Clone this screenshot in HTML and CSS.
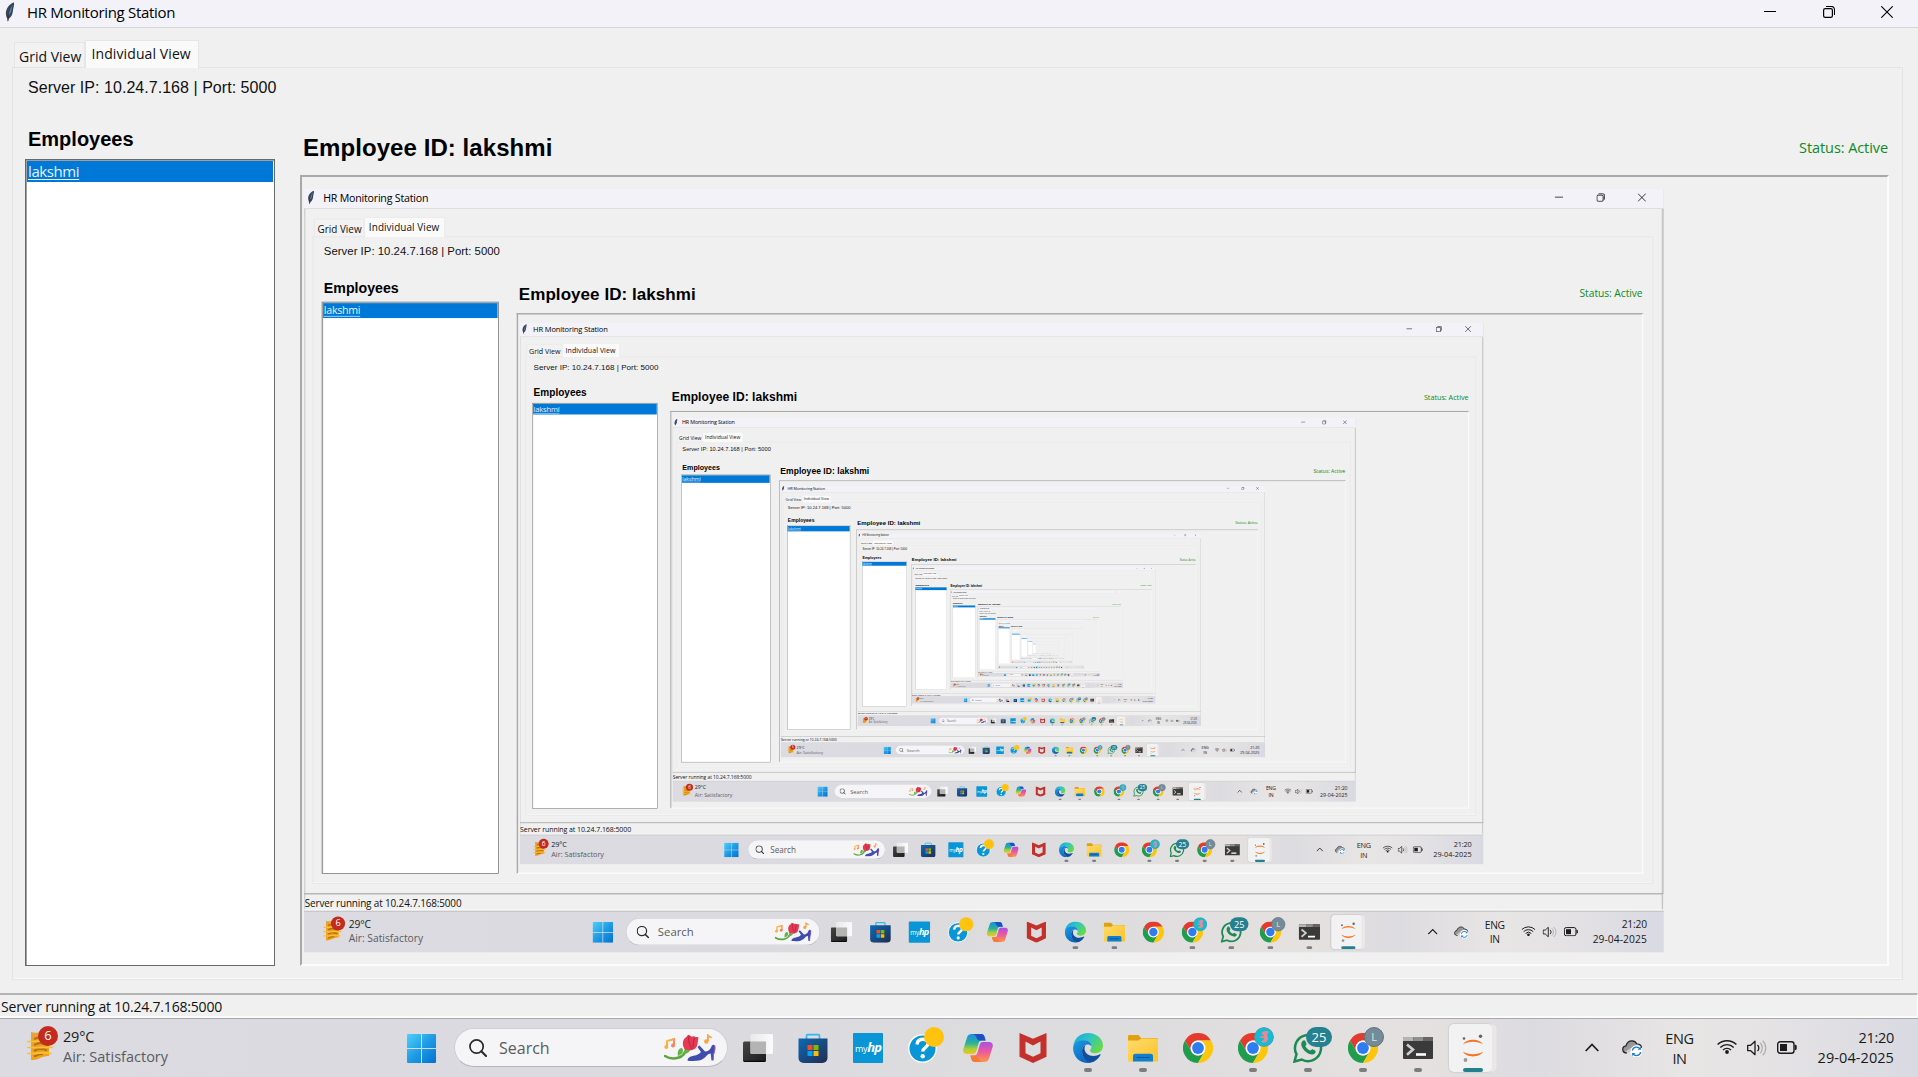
FILE: index.html
```html
<!DOCTYPE html>
<html lang="en">
<head>
<meta charset="utf-8">
<title>HR Monitoring Station</title>
<link rel="stylesheet" href="styles.css">
</head>
<body>
<svg class="sprite" aria-hidden="true">
  <defs>
    <linearGradient id="g-win" x1="0" y1="0" x2="1" y2="1"><stop offset="0" stop-color="#4fd0fb"/><stop offset=".5" stop-color="#1f9be6"/><stop offset="1" stop-color="#0072d0"/></linearGradient>
    <linearGradient id="g-dark" x1="0" y1="0" x2="1" y2="1"><stop offset="0" stop-color="#454545"/><stop offset="1" stop-color="#1c1c1c"/></linearGradient>
    <linearGradient id="g-light" x1="0" y1="0" x2="1" y2="0"><stop offset="0" stop-color="#e9e9e9"/><stop offset="1" stop-color="#fbfbfb"/></linearGradient>
    <linearGradient id="g-store" x1="0" y1="0" x2="1" y2="1"><stop offset="0" stop-color="#0c6ab5"/><stop offset="1" stop-color="#232c50"/></linearGradient>
    <linearGradient id="g-folder" x1="0" y1="0" x2="1" y2="1"><stop offset="0" stop-color="#ffdb6b"/><stop offset="1" stop-color="#fbc22c"/></linearGradient>
    <linearGradient id="g-edge1" x1="0" y1="0" x2="1" y2=".6"><stop offset="0" stop-color="#1aa3e0"/><stop offset=".5" stop-color="#2cc5c4"/><stop offset="1" stop-color="#66d94a"/></linearGradient>
    <linearGradient id="g-edge2" x1="0" y1="0" x2=".6" y2="1"><stop offset="0" stop-color="#1b9be2"/><stop offset="1" stop-color="#0b66c0"/></linearGradient>
    <linearGradient id="g-cop1" x1="0" y1="0" x2="0" y2="1"><stop offset="0" stop-color="#1a8fe0"/><stop offset=".45" stop-color="#29b09a"/><stop offset=".75" stop-color="#a9cf3b"/><stop offset="1" stop-color="#f3c21c"/></linearGradient>
    <linearGradient id="g-cop2" x1="0" y1="0" x2="0" y2="1"><stop offset="0" stop-color="#a94fe6"/><stop offset=".5" stop-color="#ee5a9b"/><stop offset="1" stop-color="#fb9a45"/></linearGradient>
    <linearGradient id="g-note" x1="0" y1="0" x2="1" y2="1"><stop offset="0" stop-color="#ffc23d"/><stop offset="1" stop-color="#f2785c"/></linearGradient>
    <linearGradient id="g-smoke" x1="0" y1="0" x2="0" y2="1"><stop offset="0" stop-color="#e8a13a"/><stop offset="1" stop-color="#f2a21c"/></linearGradient>
    <linearGradient id="g-cloud" x1="0" y1="0" x2="1" y2="1"><stop offset="0" stop-color="#8a8a8a"/><stop offset=".5" stop-color="#9c9c9c"/><stop offset=".52" stop-color="#c9c9c9"/><stop offset="1" stop-color="#dedede"/></linearGradient>
  </defs>
  <symbol id="i-feather" viewBox="0 0 10 20">
    <path d="M9 .6C6 1.200 1.600 5 .9 10.500c-.3 2.600.8 5 1.600 6.500l.4 3 .7-3C6.500 15 7.600 12 7.900 9 8.200 6 9.500 3 9 .6z" fill="#3c4450"/>
    <path d="M8 2C5.500 4 3.500 8 3 14c2.600-2.500 3.300-5 3.600-7.500C6.900 4.500 8 3.500 8 2z" fill="#4f8ede"/>
    <path d="M7.500 2.500C4 7 3 12 2.900 19" fill="none" stroke="#1d222b" stroke-width=".7"/>
  </symbol>
  <symbol id="i-min" viewBox="0 0 12 12"><path d="M0 5.500h12" stroke="#000" stroke-width="1"/></symbol>
  <symbol id="i-max" viewBox="0 0 12 12"><path d="M3 .5h5.500a3 3 0 0 1 3 3V9" fill="none" stroke="#000" stroke-width="1.100"/><rect x=".6" y="2.600" width="8.800" height="8.800" rx="1.600" fill="none" stroke="#000" stroke-width="1.200"/></symbol>
  <symbol id="i-close" viewBox="0 0 12 12"><path d="M.3.3l11.400 11.400M11.700.3L.3 11.700" stroke="#000" stroke-width="1.100"/></symbol>
  <symbol id="i-weather" viewBox="0 0 26 32">
    <path d="M4 2c4 2 12-1 18 1v23c-6-1-12 5-18 4z" fill="url(#g-smoke)"/>
    <path d="M7 9c4-2 9-2 13 0M7 15c4-2.500 9-2 13 0M7 21c4-2.500 9-2.500 13-.5M7 26.500c4-2 6-2.500 9-2.500" fill="none" stroke="#b87310" stroke-width="2.200"/>
    <path d="M1 11.500h6c4 0 8-2 17 0M0 17.500h6c5 1 10-1 20 0M1 23.500h6c5 0 8-1.500 17 0" fill="none" stroke="#fbc02d" stroke-width="1.700" stroke-linecap="round"/>
  </symbol>
  <symbol id="i-win" viewBox="0 0 29 29"><path d="M1 0h13v14H0V1a1 1 0 0 1 1-1zM15 0h13a1 1 0 0 1 1 1v13H15zM0 15h14v14H1a1 1 0 0 1-1-1zM15 15h14v13a1 1 0 0 1-1 1H15z" fill="url(#g-win)"/></symbol>
  <symbol id="i-search" viewBox="0 0 19 19"><circle cx="8" cy="8" r="7" fill="none" stroke="#2a2a2a" stroke-width="1.800"/><path d="M13 13l5 5" stroke="#2a2a2a" stroke-width="2.200" stroke-linecap="round"/></symbol>
  <symbol id="i-doodle" viewBox="0 0 52 28">
    <path d="M1 22c8 5 20 2 21-7 1-2 2-3 5-3" fill="none" stroke="#5aa63c" stroke-width="2.400" stroke-linecap="round"/>
    <path d="M14 22c-1-5 1-8 4-8 2 3 1 6-4 8zM18 20c3-4 5-4 8-4-1 3-4 4-8 4z" fill="#63b446"/>
    <path d="M20.500 4.500C22 3.500 23 2.500 24 .8c1.500.2 2.500 1 3.500 2 1.500-.8 3-.8 4.500.4 1-.2 1.800 0 2.500.3-.8 3.200-.5 6.500-2 9.500-2 3.500-8.500 4.500-12 2-1.800-2.800-2.500-7.500 0-10.500z" fill="#e23b52"/>
    <path d="M25 2c-1 4 0 8 3 13M30.500 4c-1 3-1.500 6-1.500 9" fill="none" stroke="#b8243c" stroke-width="1"/>
    <path d="M3 13V7l7-2v6" fill="none" stroke="url(#g-note)" stroke-width="2"/><circle cx="2.300" cy="13" r="2" fill="#f8b13c"/><circle cx="9" cy="11.500" r="2" fill="#f2875a"/>
    <path d="M44 7V1.500c1 1.500 3 1 3.500 2.500" fill="none" stroke="#f6a444" stroke-width="1.800"/><circle cx="42.300" cy="7.500" r="2.200" fill="#f6a444"/>
    <path d="M35.500 11.500l5.500 6c3 0 5.500-2 6.500-5 .6-1.800 2-2.500 3.300-1 .8 3 .2 6-.8 9l-.5 6h-2l-.8-7c-3 0-4.200 3-7.200 5-3 2.500-8 2.800-16 2.300 0-3 2-4.300 6-5 4-.8 6-1.800 7.500-3.800l-3.500-5z" fill="#3f4dab"/>
    <path d="M50.600 11c1 3 0 6-1 9l-.5 6" fill="none" stroke="#a95bd0" stroke-width="1"/>
  </symbol>
  <symbol id="i-taskview" viewBox="0 0 30 30">
    <rect x="0" y="8.500" width="23" height="20.500" rx="1.500" fill="url(#g-dark)"/><path d="M1 28.300h21" stroke="#000"/>
    <rect x="7.500" y="1" width="22.500" height="20" rx="1.500" fill="url(#g-light)"/><path d="M7.500 8.500H23V21H8.500a1 1 0 0 1-1-1z" fill="#b4b4b4"/>
  </symbol>
  <symbol id="i-store" viewBox="0 0 30 30">
    <path d="M8.500 6V2.700C8.500 2 9 1.600 9.600 1.600h10.800c.6 0 1.100.4 1.100 1.100V6" fill="none" stroke="#35b6ef" stroke-width="1.700"/>
    <path d="M.5 5.500h29V25a5 5 0 0 1-5 5h-19a5 5 0 0 1-5-5z" fill="url(#g-store)"/>
    <path d="M9.500 12h5v5h-5z" fill="#f25022"/><path d="M15.500 12h5v5h-5z" fill="#7fba00"/><path d="M9.500 18h5v5h-5z" fill="#00a4ef"/><path d="M15.500 18h5v5h-5z" fill="#ffb900"/>
  </symbol>
  <symbol id="i-help" viewBox="0 0 30 30">
    <circle cx="14.500" cy="15.500" r="13.700" fill="#0a96d6" stroke="#fff" stroke-width="1.300"/>
    <path d="M9 11.500c.3-4 3-5.200 5.800-5.200 3.200 0 5.200 1.700 5.200 4.300 0 3.900-5.200 3.900-5.200 7.900" fill="none" stroke="#fff" stroke-width="3.400"/><circle cx="14.700" cy="23.300" r="2.200" fill="#fff"/>
  </symbol>
  <symbol id="i-copilot" viewBox="0 0 30 30">
    <path d="M9 1h9c2 0 3 1 3.600 3l1 3.500h-3.500c-2 0-3 1-3.600 3l-2.300 8c-.5 1.700-1.500 2.500-3.500 2.500H4C1 21-.4 19 .4 16L4 4.500C4.800 2 6.300 1 9 1z" fill="url(#g-cop1)"/>
    <path d="M9 1h9c2 0 3 1 3.600 3l1 3.500h-6C13 7.500 14 1 9 1z" fill="#1f4fc4"/>
    <path d="M21 29h-9c-2 0-3-1-3.600-3l-1-3.500h3.500c2 0 3-1 3.600-3l2.300-8c.5-1.700 1.500-2.500 3.500-2.500H26c3 0 4.400 2 3.600 5L26 25.500c-.8 2.500-2.300 3.500-5 3.500z" fill="url(#g-cop2)"/>
    <path d="M21 29h-9c-2 0-3-1-3.600-3l-1-3.500h4c4 0 4 6.500 9.600 6.500z" fill="#f57a36"/>
  </symbol>
  <symbol id="i-mcafee" viewBox="0 0 27 30"><path d="M0 0l13.500 5.800L27 0v23.800L13.500 30 0 23.800zM6 8.500v11.700l7.500 3.500 7.500-3.500V8.500l-7.500 3.900z" fill="#c4302b" fill-rule="evenodd"/></symbol>
  <symbol id="i-edge" viewBox="0 0 30 30">
    <path d="M.3 13C1.500 5 7.500 0 15 0c8.500 0 15 5.800 15 12.500 0 5-3.500 7.700-7.600 7.700-3.400 0-5.400-1.200-5.400-2.700 0-1 1.500-1.500 1.500-4C18.500 10 15.500 7.500 11 7.500 6 7.500 2.500 10 .3 13z" fill="url(#g-edge1)"/>
    <path d="M.2 14C1 9.800 5 7.300 10.500 7.300c5 0 8 2.700 8 6-1.300-1.400-2.500-1.800-4.200-1.800-3.300 0-5.300 3-5.300 6.500 0 5.500 4 10 9.500 11.500-1 .3-2.200.5-3.500.5C6.500 30-.6 23 .2 14z" fill="url(#g-edge2)"/>
    <path d="M9 18c0-3 1.500-5.500 4-6.300-1 1-1.500 2.300-1.500 3.800 0 4.500 4 7.500 9 7.500 2.500 0 4.500-.7 6.300-1.700.6-.3 1 .2.700.7C25 26.500 21 29.300 17.500 29.500 13 28.500 9 24 9 18z" fill="#0f4f9c"/>
  </symbol>
  <symbol id="i-folder" viewBox="0 0 30 30">
    <path d="M0 3.500C0 2.500.7 2 1.500 2h8c1 0 1.500.4 2 1.200L13 5h15.500c1 0 1.500.6 1.500 1.500V9H0z" fill="#e0a010"/>
    <path d="M0 7.500h11l2-2h15.500c1 0 1.500.5 1.500 1.500v21.500H0z" fill="url(#g-folder)"/>
    <path d="M5 28.500V23c0-1.500 1-2.300 2.300-2.300h15.400c1.300 0 2.300.8 2.300 2.300v5.500z" fill="#0f7fd4"/><path d="M9 24.500h12" stroke="#08529a" stroke-width="1.200" stroke-linecap="round"/>
  </symbol>
  <symbol id="i-chrome" viewBox="0 0 30 30">
    <path d="M2 7.500A15 15 0 0 1 28 7.500H15a7.500 7.500 0 0 0-6.500 11.200z" fill="#e33b2e"/>
    <path d="M2 7.500A15 15 0 0 0 15 30l6.500-11.200a7.500 7.500 0 0 1-13 0z" fill="#1f9d4d"/>
    <path d="M28 7.500A15 15 0 0 1 15 30l6.500-11.200A7.500 7.500 0 0 0 15 7.500z" fill="#fdc60d"/>
    <circle cx="15" cy="15" r="7.400" fill="#fff"/><circle cx="15" cy="15" r="5.900" fill="#2e7cf0"/>
  </symbol>
  <symbol id="i-whatsapp" viewBox="0 0 30 30">
    <path d="M1.500 28.500l2-7.300A13 13 0 1 1 8.700 26.500z" fill="none" stroke="#1d8a55" stroke-width="2.500"/>
    <path d="M9.500 8c1-1 2.300-.9 2.800.1l1.200 2.700c.3.800-1.200 1.900-1 2.400 1 2 2.500 3.400 4.500 4.300.7.200 1.600-1.600 2.400-1.300l2.700 1.400c1 .6.500 2.300-.5 3.100-1.500 1.200-3.600 1.100-6.500-.3-3-1.500-5-3.800-6.200-6.300C7.900 11.800 8 9.500 9.500 8z" fill="#1d8a55"/>
  </symbol>
  <symbol id="i-terminal" viewBox="0 0 30 30">
    <rect x="0" y="4" width="30" height="22" rx="1" fill="#3a3a3a"/><path d="M0 8V5a1 1 0 0 1 1-1h9.500v4z" fill="#b5b5b5"/><path d="M10.500 4H20v4h-9.500z" fill="#8f8f8f"/><path d="M20 4h9a1 1 0 0 1 1 1v3H20z" fill="#666"/>
    <path d="M4 11.500l6 5-6 5.200" fill="none" stroke="#cfcfcf" stroke-width="2.600"/><path d="M13 21.500h10" stroke="#fff" stroke-width="2.600"/>
  </symbol>
  <symbol id="i-jupyter" viewBox="0 0 22 30">
    <path d="M1 11.500C4 5 18 5 21 11.500 16 7.800 6 7.800 1 11.500zM1 18.500C4 25 18 25 21 18.500 16 22.200 6 22.200 1 18.500z" fill="#f37726"/>
    <circle cx="2" cy="5.500" r="1.300" fill="#616262"/><circle cx="18.500" cy="3.300" r="1.700" fill="#616262"/><circle cx="3.500" cy="27" r="1.900" fill="#989798"/>
  </symbol>
  <symbol id="i-up" viewBox="0 0 14 9"><path d="M.7 8L7 1.500 13.300 8" fill="none" stroke="#1c1c1c" stroke-width="1.700"/></symbol>
  <symbol id="i-cloud" viewBox="0 0 20 18">
    <path d="M5 14C-.5 14-.5 7.500 4 6.800 5.500 1 12.500.2 14.800 5 18 4.800 20 7 19.300 9.500" fill="url(#g-cloud)" stroke="#222" stroke-width="1.200"/>
    <circle cx="14.500" cy="12.300" r="6" fill="#fff"/>
    <path d="M10.300 11.500a4.300 4.300 0 0 1 7.800-1.500M18.700 13.100a4.300 4.300 0 0 1-7.800 1.500" fill="none" stroke="#1c78cf" stroke-width="1.300"/><path d="M18.900 7.500v3.200h-3.200zM10.100 17.100v-3.200h3.200z" fill="#1c78cf"/>
  </symbol>
  <symbol id="i-wifi" viewBox="0 0 20 15"><path d="M.6 5.600a13.300 13.300 0 0 1 18.800 0M3.300 8.400a9.500 9.500 0 0 1 13.400 0M6 11a5.700 5.700 0 0 1 8 0" fill="none" stroke="#1c1c1c" stroke-width="1.400"/><circle cx="10" cy="13" r="1.900" fill="#1c1c1c"/></symbol>
  <symbol id="i-sound" viewBox="0 0 20 16">
    <path d="M.7 5.300h3L8 1.300v13.400l-4.300-4h-3z" fill="none" stroke="#1c1c1c" stroke-width="1.300" stroke-linejoin="round"/>
    <path d="M10.500 5a4 4 0 0 1 0 6" fill="none" stroke="#1c1c1c" stroke-width="1.300"/><path d="M13 2.800a7 7 0 0 1 0 10.400M15.700.8a10 10 0 0 1 0 14.400" fill="none" stroke="#b0aeae" stroke-width="1.200"/>
  </symbol>
  <symbol id="i-battery" viewBox="0 0 20 13"><rect x=".7" y=".7" width="16.300" height="11.600" rx="2.500" fill="none" stroke="#1c1c1c" stroke-width="1.400"/><rect x="3" y="3" width="7" height="7" fill="#1c1c1c"/><path d="M17.700 3.800c1.300 0 2 .5 2 1.400v2.600c0 .9-.7 1.400-2 1.400z" fill="#1c1c1c"/></symbol>
  <symbol id="i-avatar" viewBox="0 0 20 20"><circle cx="10" cy="10" r="9.600" fill="#12bcd4" stroke="#5b8f98" stroke-width=".8"/><path d="M14.500 4.500c-3-1-7 0-7 2 0 1.500 2 1.200 3 2.500-2 .3-5 0-5 1 1 1.500 4 .8 5 1.600-1 1.800-2.500 2.200-3.500 3.400 3 1.500 6.500.5 7-2.500.3-2-1-3.500-.6-5 .3-1.200 1.300-1.500 1.100-3z" fill="#e58a94"/></symbol>
</svg>

<div class="screen" id="screen">
  <div class="client">
    <header class="titlebar">
      <svg class="feather"><use href="#i-feather"/></svg>
      <span class="title">HR Monitoring Station</span>
      <div class="controls">
        <svg class="ctl"><use href="#i-min"/></svg>
        <svg class="ctl"><use href="#i-max"/></svg>
        <svg class="ctl"><use href="#i-close"/></svg>
      </div>
    </header>
    <nav class="tabs">
      <span class="tab">Grid View</span>
      <span class="tab tab-active">Individual View</span>
    </nav>
    <main class="pane">
      <p class="server">Server IP: 10.24.7.168 | Port: 5000</p>
      <div class="columns">
        <aside class="employees">
          <h2 class="list-title">Employees</h2>
          <div class="listbox"><div class="option">lakshmi</div></div>
        </aside>
        <section class="detail">
          <div class="detail-head">
            <h1 class="employee">Employee ID: lakshmi</h1>
            <span class="active">Status: Active</span>
          </div>
          <div class="canvas"><div class="feed"></div></div>
        </section>
      </div>
    </main>
    <footer class="statusbar">Server running at 10.24.7.168:5000</footer>
  </div>
  <div class="taskbar">
    <div class="weather">
      <div class="weather-icon"><svg class="smoke"><use href="#i-weather"/></svg><span class="count">6</span></div>
      <div class="weather-text"><span class="temp">29°C</span><span class="air">Air: Satisfactory</span></div>
    </div>
    <svg class="start"><use href="#i-win"/></svg>
    <div class="search"><svg class="glass"><use href="#i-search"/></svg><span class="search-text">Search</span><svg class="doodle"><use href="#i-doodle"/></svg></div>
    <div class="apps">
      <div class="app"><svg class="icon"><use href="#i-taskview"/></svg></div>
      <div class="app"><svg class="icon"><use href="#i-store"/></svg></div>
      <div class="app"><span class="myhp">my<i class="hp">hp</i></span></div>
      <div class="app"><svg class="icon"><use href="#i-help"/></svg><span class="badge badge-alert"></span></div>
      <div class="app"><svg class="icon"><use href="#i-copilot"/></svg></div>
      <div class="app"><svg class="icon"><use href="#i-mcafee"/></svg></div>
      <div class="app running"><svg class="icon"><use href="#i-edge"/></svg></div>
      <div class="app running"><svg class="icon"><use href="#i-folder"/></svg></div>
      <div class="app"><svg class="icon"><use href="#i-chrome"/></svg></div>
      <div class="app running"><svg class="icon"><use href="#i-chrome"/></svg><svg class="badge"><use href="#i-avatar"/></svg></div>
      <div class="app running"><svg class="icon"><use href="#i-whatsapp"/></svg><span class="badge badge-unread">25</span></div>
      <div class="app running"><svg class="icon"><use href="#i-chrome"/></svg><span class="badge badge-letter">L</span></div>
      <div class="app running"><svg class="icon"><use href="#i-terminal"/></svg></div>
      <div class="app focused"><svg class="icon"><use href="#i-jupyter"/></svg></div>
    </div>
    <div class="tray">
      <svg class="up"><use href="#i-up"/></svg>
      <svg class="cloud"><use href="#i-cloud"/></svg>
      <div class="lang"><span>ENG</span><span>IN</span></div>
      <svg class="wifi"><use href="#i-wifi"/></svg>
      <svg class="sound"><use href="#i-sound"/></svg>
      <svg class="battery"><use href="#i-battery"/></svg>
      <div class="clock"><span class="time">21:20</span><span class="date">29-04-2025</span></div>
    </div>
  </div>
</div>
<script src="feed.js"></script>
</body>
</html>
```
FILE: styles.css
```css
* { box-sizing: border-box; }
body { margin: 0; overflow: hidden; background: #f0f0f0; font-family: "Open Sans", "Noto Sans", sans-serif; color: #000; }
svg { display: block; flex: none; }
span, p, h1, h2 { white-space: nowrap; }
.sprite { position: absolute; width: 0; height: 0; }

.screen { width: 1918px; height: 1077px; display: flex; flex-direction: column; background: #f0f0f0; overflow: hidden; }
.client { flex: 1; min-height: 0; display: flex; flex-direction: column; }
.feed .client { box-shadow: inset 2px 0 #d2d2d2, inset -3px 0 #c6c6c6; }

.titlebar { height: 28px; flex: none; display: flex; align-items: flex-start; padding: 0 25px 0 5px; background: #f2f2f8; border-bottom: 1px solid #d6d6d6; }
.feather { width: 10px; height: 20px; margin: 2px 12px 0 0; }
.title { font-size: 15px; line-height: 25px; letter-spacing: -.3px; }
.controls { margin-left: auto; display: flex; gap: 46.500px; padding-top: 6px; }
.ctl { width: 12px; height: 12px; }

.tabs { height: 39px; flex: none; display: flex; align-items: flex-end; padding-left: 14px; font-size: 14px; color: #111; }
.tab { height: 25px; width: 71px; padding-left: 4px; line-height: 27px; border: 1px solid #e6e6e6; border-bottom: 0; background: #f2f2f2; }
.tab-active { height: 28px; width: 114px; margin-bottom: -1px; padding-left: 5.500px; line-height: 26px; letter-spacing: .1px; background: #fafafa; position: relative; }

.pane { flex: 1; min-height: 0; margin: 0 15px 13px 12px; padding: 10px 13px 13px 12px; border: 1px solid #e4e4e4; box-shadow: inset 0 -1px #fafafa; display: flex; flex-direction: column; }
.server { margin: 0 0 0 3px; height: 20px; font: 16px/20px "Liberation Sans", Arial, sans-serif; letter-spacing: .04px; color: #111; }
.columns { flex: 1; min-height: 0; display: flex; gap: 25px; padding-top: 27.500px; }
.employees { width: 250px; display: flex; flex-direction: column; }
.list-title { margin: 0 0 7.500px 3px; height: 26px; font: bold 20px/26px "Liberation Sans", Arial, sans-serif; }
.listbox { flex: 1; padding: 1px; background: #fff; border: 1px solid #696969; box-shadow: inset 1px 1px #a0a0a0; }
.option { height: 21px; line-height: 20px; font-size: 15px; letter-spacing: -.4px; color: #e8f2fb; background: #0078d7; text-decoration: underline; text-underline-offset: 1.500px; padding-left: 1px; }
.detail { flex: 1; display: flex; flex-direction: column; padding-top: 4.500px; }
.detail-head { height: 34px; display: flex; justify-content: space-between; align-items: center; padding: 1px 1px 0 3px; margin-bottom: 10.500px; }
.employee { margin: 0; font: bold 24px/34px "Liberation Sans", Arial, sans-serif; letter-spacing: .07px; }
.active { font-size: 14.500px; line-height: 34px; letter-spacing: -.08px; color: #0d8a1d; }
.canvas { flex: 1; min-height: 0; padding: 12px 0 0 1.800px; border: 2px solid #fbfbfb; border-top-color: #a8a8a8; border-left-color: #a8a8a8; }
.feed { width: 1360px; height: 764px; overflow: hidden; }
.feed .screen { transform: scale(.709); transform-origin: 0 0; }

.statusbar { height: 25px; flex: none; padding-left: 1px; border: solid #fbfbfb; border-width: 2px 1px 2px 0; border-top-color: #b4b4b4; font-size: 14px; line-height: 23px; letter-spacing: -.19px; color: #111; white-space: nowrap; }

.taskbar { height: 59px; flex: none; display: flex; border-top: 1px solid #a9a9ad; background: linear-gradient(90deg, #dbdbe1 0, #dadae0 30%, #dcdbde 48%, #dddcde 58%, #e5e1e0 74%, #dcdbdf 80%, #e8e5e5 88%, #e5e3e4 92%, #d9d9e2 100%); }
.weather { width: 380px; padding: 7px 0 0 27px; display: flex; gap: 10px; }
.weather-icon { position: relative; width: 26px; height: 37px; padding-top: 4px; }
.smoke { width: 26px; height: 32px; }
.count { position: absolute; left: 11px; top: 0; width: 20px; height: 20px; border-radius: 50%; background: #c42b1c; color: #fff; font-size: 13px; line-height: 19px; text-align: center; }
.weather-text { display: flex; flex-direction: column; padding-top: 1px; font-size: 14.500px; line-height: 20px; }
.temp { letter-spacing: -.2px; color: #1a1a1a; }
.air { color: #5a5a60; }
.start { width: 29px; height: 29px; margin: 15px 0 0 27px; }
.search { width: 274px; height: 39px; margin: 9px 0 0 17.500px; padding: 0 11px 0 14px; display: flex; align-items: center; border-radius: 20px; background: #f5f5f7; border: 1px solid #cfcfd4; border-bottom-color: #b5b5ba; }
.glass { width: 18px; height: 18px; }
.search-text { margin: 1px auto 0 12.500px; font-size: 16px; color: #5b5b5b; }
.doodle { width: 52px; height: 28px; }
.apps { display: flex; margin-left: 3px; }
.app { position: relative; width: 55px; height: 58px; padding: 14px 12.500px 0; }
.icon { width: 30px; height: 30px; }
.running::after, .focused::after { content: ""; position: absolute; left: 23.500px; top: 49px; width: 8px; height: 4px; border-radius: 2px; background: #7d7d80; }
.focused::after { left: 17.500px; width: 20px; background: #23808f; }
.focused::before { content: ""; position: absolute; left: 3.500px; top: 5px; width: 43px; height: 48px; border-radius: 5px; background: #f3f2f3; box-shadow: 5px 0 0 -.5px #e9e7e8, 0 0 1px 1px #d2d0d2; }
.focused .icon { position: relative; }
.myhp { display: block; width: 30px; height: 30px; background: #0a96d6; border-radius: 1px; color: #fff; font-size: 9px; line-height: 28px; text-align: center; letter-spacing: -.3px; }
.hp { font-size: 13px; font-weight: 700; letter-spacing: -1px; }
.badge { position: absolute; left: 28.500px; top: 8px; width: 20px; height: 20px; border-radius: 10px; text-align: center; color: #fff; }
.badge-alert { background: #ffc20e; }
.badge-unread { left: 25.500px; width: 26px; background: #25808f; font-size: 13px; line-height: 20px; }
.badge-letter { background: #748b98; border: 1px solid #5f7480; font-size: 11px; line-height: 18px; color: #dfe5e9; }

.tray { margin-left: auto; display: flex; padding-right: 24px; font-size: 14.500px; line-height: 19.500px; color: #1a1a1a; }
.up { width: 14px; height: 9px; margin: 24px 22.500px 0 0; }
.cloud { width: 20px; height: 18px; margin: 20px 24px 0 0; }
.lang { width: 28px; display: flex; flex-direction: column; align-items: center; padding-top: 10px; margin-right: 23px; letter-spacing: -.4px; }
.wifi { width: 20px; height: 15px; margin: 20px 10px 0 0; }
.sound { width: 20px; height: 16px; margin: 21px 10px 0 0; }
.battery { width: 20px; height: 13px; margin: 22px 20.500px 0 0; }
.clock { width: 77px; display: flex; flex-direction: column; align-items: flex-end; padding-top: 9px; line-height: 20px; }
.time { letter-spacing: -.3px; }
.date { letter-spacing: .08px; }
```
FILE: feed.js
```js
// The monitored machine shows its own screen, so the live feed repeats inside itself.
const DEPTH = 13;
const TEXT_DEPTH = 9;

const screenNode = document.getElementById("screen");
const template = screenNode.cloneNode(true);
template.removeAttribute("id");

// Past this depth the letters are thinner than a pixel: only the shapes remain.
const bare = template.cloneNode(true);
bare.querySelectorAll("span, p, h1, h2, i, footer, .option").forEach((node) => {
  [...node.childNodes].forEach((child) => {
    if (child.nodeType === Node.TEXT_NODE) child.remove();
  });
});

let feed = screenNode.querySelector(".feed");
for (let level = 0; level < DEPTH; level++) {
  const copy = (level < TEXT_DEPTH ? template : bare).cloneNode(true);
  feed.appendChild(copy);
  feed = copy.querySelector(".feed");
}
```
